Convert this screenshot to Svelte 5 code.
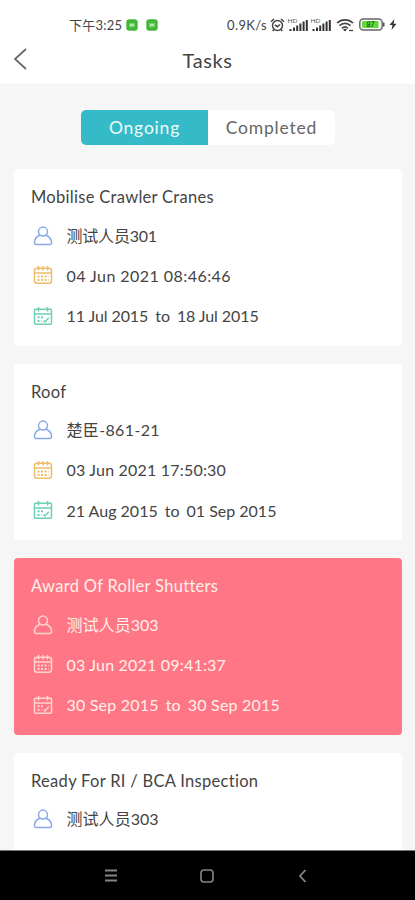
<script lang="ts">
  // text plus its letter spacing in px
  type Line = [string, number];

  type Task = {
    title: string;
    person: Line;
    created?: Line;
    period?: [string, string, number];
    overdue?: boolean;
  };

  const tasks: Task[] = [
    {
      title: "Mobilise Crawler Cranes",
      person: ["测试人员301", -0.2],
      created: ["04 Jun 2021 08:46:46", 0.45],
      period: ["11 Jul 2015", "18 Jul 2015", -0.08],
    },
    {
      title: "Roof",
      person: ["楚臣-861-21", 0.35],
      created: ["03 Jun 2021 17:50:30", 0.2],
      period: ["21 Aug 2015", "01 Sep 2015", 0],
    },
    {
      title: "Award Of Roller Shutters",
      person: ["测试人员303", 0.05],
      created: ["03 Jun 2021 09:41:37", 0.2],
      period: ["30 Sep 2015", "30 Sep 2015", 0.2],
      overdue: true,
    },
    {
      title: "Ready For RI / BCA Inspection",
      person: ["测试人员303", 0.05],
    },
  ];

  let tab = $state("Ongoing");
</script>

{#snippet signal()}
  <svg class="signal" width="20" height="14" viewBox="0 0 20 14">
    <text x="-.5" y="5" font-size="6.5" fill="#555">HD</text>
    <path d="M2.5 11v2M6 9.5V13M9.2 7.5V13M12.4 5.5V13M15.6 3.5V13M18.8 2V13" stroke="#333" stroke-width="2" />
  </svg>
{/snippet}

{#snippet chat()}
  <svg width="12" height="12" viewBox="0 0 12 12">
    <rect x=".3" y=".3" width="11.4" height="11.4" rx="3" fill="#43b638" />
    <path d="M3.2 4.2h5.6v3.5H6L4.3 9V7.7H3.2z" fill="#8bd984" />
    <path d="M5 5v2M7 5v2" stroke="#e7f8e5" stroke-width=".8" />
  </svg>
{/snippet}

<div class="screen">
  <div class="status">
    <div class="status-left">
      <span class="clock">下午3:25</span>
      {@render chat()}
      {@render chat()}
    </div>
    <div class="status-right">
      <span class="speed">0.9K/s</span>
      <svg width="15" height="14" viewBox="0 0 15 14" fill="none" stroke="#444" stroke-width="1.5">
        <circle cx="7.5" cy="7.5" r="5" />
        <path d="M1 3.8 4 1M14 3.8 11 1M5 6.8l2.4 1.9L10 6.5M4 11.5 2.7 13M11 11.5l1.3 1.5" />
      </svg>
      {@render signal()}
      {@render signal()}
      <svg class="wifi" width="18" height="14" viewBox="0 0 18 14" fill="none" stroke="#444" stroke-width="1.7">
        <path d="M1 5c4.5-4.3 11.5-4.3 16 0M3.5 7.7c3-3 8-3 11 0M6 10.3c1.8-1.7 4.2-1.7 6 0" />
        <path d="m9 13.5-2-2.2c1.2-.9 2.8-.9 4 0z" fill="#333" stroke="none" />
        <path d="M13 12.5h4" stroke-width="1.3" />
      </svg>
      <svg class="battery" width="26" height="13" viewBox="0 0 26 13">
        <rect x=".8" y="1" width="22.4" height="11" rx="3.5" fill="#fff" stroke="#666" stroke-width="1.5" />
        <rect x="3" y="3" width="16.5" height="7" rx="1" fill="#62d83a" />
        <path d="M24 4.5h1.5v4H24z" fill="#555" />
        <text x="7.5" y="9" font-size="7" font-weight="700" fill="#24631a">87</text>
      </svg>
      <svg class="bolt" width="8" height="11" viewBox="0 0 8 11"><path d="M5.5 0 .5 6h3L2.5 11l5-6.2h-3z" fill="#333" /></svg>
    </div>
  </div>

  <header>
    <button class="back" aria-label="Back">
      <svg width="14" height="22" viewBox="0 0 14 22" fill="none" stroke="#666" stroke-width="1.7"><path d="M13 1 2 11l11 10" /></svg>
    </button>
    <h1>Tasks</h1>
  </header>

  <main>
    <div class="tabs">
      {#each ["Ongoing", "Completed"] as name}
        <button class:active={tab === name} onclick={() => (tab = name)}>{name}</button>
      {/each}
    </div>

    {#each tasks as task}
      <section class="card" class:overdue={task.overdue}>
        <h2>{task.title}</h2>
        <div class="row person">
          <svg width="20" height="20" viewBox="0 0 20 20">
            <circle cx="10" cy="5.6" r="4.5" />
            <path d="M6.8 9.2C3.4 10.7 1.4 13.4 1.4 16.8c0 1.2.5 1.7 1.6 1.7h14c1.1 0 1.6-.5 1.6-1.7 0-3.4-2-6.1-5.4-7.6" />
          </svg>
          <span style:letter-spacing="{task.person[1]}px">{task.person[0]}</span>
        </div>
        {#if task.created}
          <div class="row created">
            <svg width="20" height="20" viewBox="0 0 20 20">
              <rect x="1.5" y="3.3" width="17" height="15" rx="2.5" />
              <path d="M1.5 8h17M5.5 1v4.5M10 1v4.5M14.5 1v4.5" />
              <path class="dots" d="M4.5 11.5h11M4.5 15h11" />
            </svg>
            <span style:letter-spacing="{task.created[1]}px">{task.created[0]}</span>
          </div>
        {/if}
        {#if task.period}
          <div class="row period">
            <svg width="20" height="20" viewBox="0 0 20 20">
              <rect x="1.5" y="3.3" width="17" height="15" rx="1" />
              <path d="M1.5 8h17M5.5 1v4.5M14.5 1v4.5M10.5 14.5l1.5 1.5 3.8-4.3" />
              <path class="dots" d="M4.5 11.3h7M4.5 15h4" />
            </svg>
            <span style:letter-spacing="{task.period[2]}px">{task.period[0]}<i>to</i>{task.period[1]}</span>
          </div>
        {/if}
      </section>
    {/each}
  </main>

  <nav>
    <svg width="14" height="14" viewBox="0 0 14 14" stroke="#858585" stroke-width="1.8"><path d="M1 1.5h12M1 6.5h12M1 11.5h12" /></svg>
    <svg width="14" height="14" viewBox="0 0 14 14" fill="none" stroke="#858585" stroke-width="1.6"><rect x="1" y="1" width="12" height="12" rx="3" /></svg>
    <svg width="14" height="14" viewBox="0 0 14 14" fill="none" stroke="#858585" stroke-width="1.8"><path d="M9.5 1 4 7l5.5 6" /></svg>
  </nav>
</div>

<style>
  .screen {
    display: flex;
    flex-direction: column;
    height: 900px;
    overflow: hidden;
    background: #f6f6f7;
    color: #444;
    font-family: Lato, "Noto Sans CJK SC", sans-serif;
  }
  svg {
    display: block;
    flex: none;
  }
  button {
    border: 0;
    padding: 0;
    background: none;
    font: inherit;
    letter-spacing: inherit;
    color: inherit;
  }
  .status {
    display: flex;
    flex: none;
    justify-content: space-between;
    height: 38px;
    padding: 10px 18px 0 69px;
    box-sizing: border-box;
    background: #fff;
    font-size: 13px;
  }
  .status-left,
  .status-right {
    display: flex;
    align-items: center;
    height: 29px;
  }
  .status-left {
    gap: 8px;
  }
  .clock {
    margin-right: -4px;
    letter-spacing: 0.25px;
    white-space: nowrap;
  }
  .speed {
    margin-right: 3px;
    letter-spacing: 0.35px;
  }
  .signal {
    margin-left: 3px;
  }
  .wifi {
    margin-left: 5px;
  }
  .battery {
    margin-left: 5px;
  }
  .bolt {
    margin-left: 4px;
  }
  header {
    display: grid;
    grid-template-columns: 60px 1fr 60px;
    align-items: center;
    flex: none;
    height: 46px;
    padding-bottom: 2px;
    box-sizing: border-box;
    background: #fff;
    border-bottom: 1px solid #fafafa;
  }
  .back {
    padding: 0 0 2px 13px;
  }
  h1 {
    margin: 0;
    text-align: center;
    font-size: 20px;
    font-weight: 400;
    letter-spacing: 0.6px;
  }
  main {
    display: flex;
    flex: 1;
    flex-direction: column;
    gap: 18px;
    min-height: 0;
    padding: 26px 13px 0 14px;
    overflow: hidden;
  }
  .tabs {
    display: grid;
    grid-template-columns: 127px 127px;
    flex: none;
    align-self: center;
    height: 35px;
    margin-bottom: 6px;
    border-radius: 5px;
    overflow: hidden;
    background: #fff;
    color: #666;
    font-size: 17.5px;
    letter-spacing: 0.8px;
  }
  .tabs .active {
    background: #34bbc7;
    color: #f0fcfc;
  }
  .card {
    flex: none;
    height: 176.5px;
    padding: 18px 17px 0;
    box-sizing: border-box;
    border-radius: 4px;
    background: #fff;
    font-size: 16px;
  }
  .card:last-child {
    height: 98px;
    border-radius: 4px 4px 0 0;
  }
  h2 {
    margin: 0 0 8px;
    font-size: 16.5px;
    font-weight: 400;
    line-height: 21px;
    letter-spacing: 0.3px;
  }
  .row {
    display: flex;
    align-items: center;
    gap: 13.5px;
    height: 40.5px;
    padding-left: 2px;
    line-height: 20px;
    white-space: nowrap;
  }
  .person {
    height: 39px;
  }
  .created span,
  .period span {
    padding-top: 1px;
  }
  .row svg {
    fill: none;
    stroke: currentColor;
    stroke-width: 1.5;
  }
  .row .dots {
    stroke-width: 2;
    stroke-dasharray: 2 1.5;
  }
  .person svg {
    color: #87a9e5;
  }
  .created svg {
    color: #ecbd6b;
  }
  .period svg {
    color: #6dcfb4;
  }
  i {
    margin: 0 7px;
    font-style: normal;
  }
  .overdue {
    background: #ff7786;
    color: #fff0e9;
  }
  .overdue svg {
    color: #ffd5cf;
  }
  nav {
    display: flex;
    flex: none;
    align-items: center;
    gap: 82px;
    height: 50px;
    padding-left: 104px;
    box-sizing: border-box;
    border-top: 1px solid #777;
    background: #000;
  }
</style>
